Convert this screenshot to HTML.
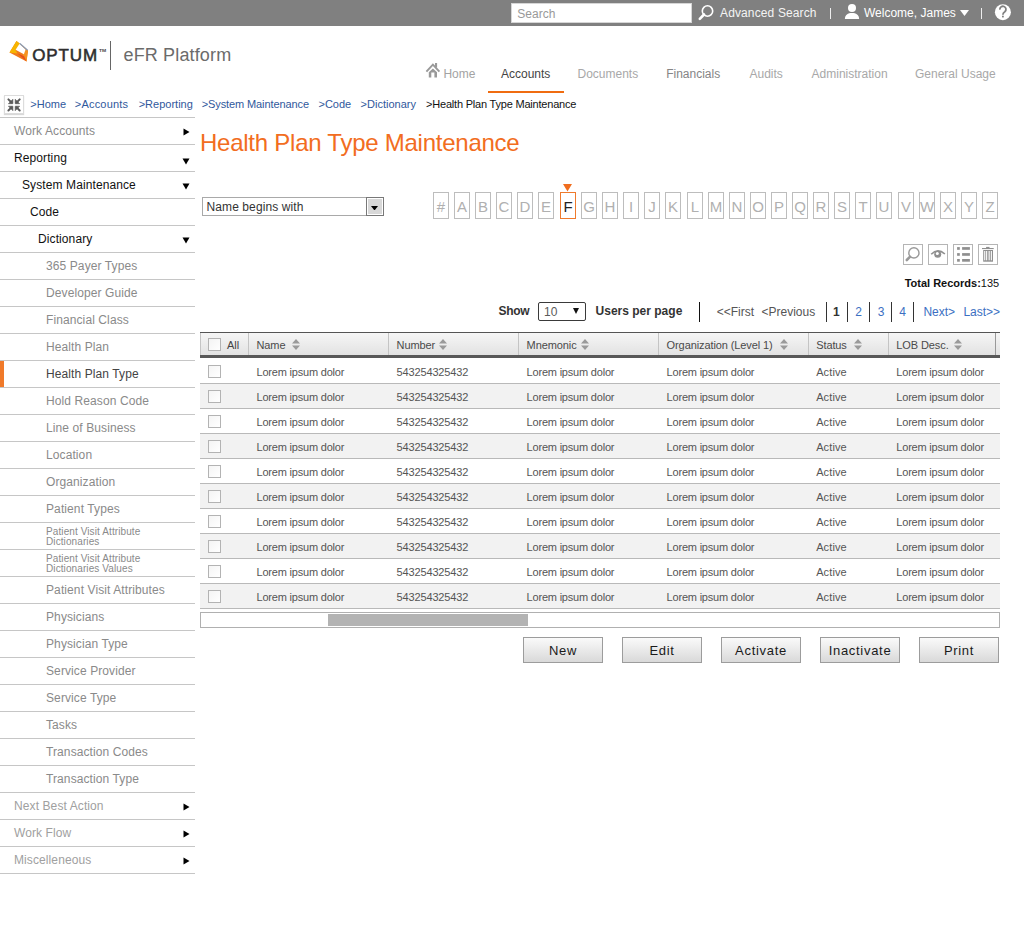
<!DOCTYPE html>
<html><head><meta charset="utf-8"><style>
html,body{margin:0;padding:0;}
body{width:1024px;height:950px;position:relative;overflow:hidden;background:#fff;font-family:"Liberation Sans", sans-serif;}
.t{position:absolute;white-space:nowrap;}
.b{position:absolute;}
</style></head><body>
<div class="b" style="left:0px;top:0px;width:1024px;height:26px;background:#808080"></div>
<div class="b" style="left:511px;top:3px;width:181px;height:20px;background:#fff;border:1px solid #d6d6d6;box-sizing:border-box"></div>
<div class="t" style="left:517.3px;top:4.84px;font-size:12px;line-height:18px;color:#999;font-weight:400;">Search</div>
<svg class="b" style="left:696px;top:3px" width="20" height="20" viewBox="0 0 20 20"><circle cx="11.5" cy="8" r="5.2" fill="none" stroke="#fff" stroke-width="1.6"/><line x1="8" y1="11.5" x2="3.8" y2="15.8" stroke="#fff" stroke-width="2.6" stroke-linecap="round"/></svg>
<div class="t" style="left:720px;top:4.14px;font-size:12px;line-height:18px;color:#f4f4f4;font-weight:400;letter-spacing:0.13px">Advanced Search</div>
<div class="b" style="left:830px;top:8px;width:1px;height:11px;background:#eee"></div>
<svg class="b" style="left:844px;top:3px" width="16" height="18" viewBox="0 0 16 18"><circle cx="8" cy="5" r="4" fill="#fff"/><path d="M0.9 16 C0.9 11.6 4 9.9 8 9.9 C12 9.9 15.1 11.6 15.1 16 Z" fill="#fff"/></svg>
<div class="t" style="left:864px;top:4.14px;font-size:12px;line-height:18px;color:#fff;font-weight:400;">Welcome, James</div>
<svg class="b" style="left:960px;top:10px" width="9" height="6" viewBox="0 0 9 6"><path d="M0 0 H9 L4.5 6 Z" fill="#fff"/></svg>
<div class="b" style="left:981px;top:8px;width:1px;height:11px;background:#eee"></div>
<svg class="b" style="left:994px;top:4px" width="18" height="18" viewBox="0 0 18 18"><circle cx="8.9" cy="8.2" r="8" fill="#fff"/><path d="M5.9 5.7 A3.05 3.05 0 1 1 10.8 7.7 Q8.9 8.9 8.9 10.7" fill="none" stroke="#808080" stroke-width="1.8"/><rect x="8" y="11.7" width="1.8" height="1.7" fill="#808080"/></svg>
<svg class="b" style="left:0px;top:30px" width="32" height="40" viewBox="0 30 32 40"><path d="M16.5 41 L28 50.4 L26.5 61.5 L9.5 52.5 Z" fill="#f07a1c"/><path d="M16.5 41 L20 43.8 L15.5 50 L17.5 53.6 L9.5 52.5 Z" fill="#f7b500"/><path d="M24.5 49.5 L28 50.4 L26.5 61.5 L22 57 Z" fill="#f59320"/><path d="M17.5 53.6 L24 56 L26.5 61.5 Z" fill="#e8501a"/><path d="M19.5 43.8 L15.6 49.8 L23.9 54.2 L25.6 49.6 Z" fill="#fff"/><path d="M19.8 43.6 L27.6 50.2" stroke="#8a9ab0" stroke-width="1.3"/></svg>
<div class="t" style="left:32.2px;top:42.91px;font-size:17px;line-height:26px;color:#2e2e2e;font-weight:400;letter-spacing:0.9px;-webkit-text-stroke:0.55px #2e2e2e">OPTUM</div>
<div class="t" style="left:99.4px;top:47.51px;font-size:4px;line-height:6px;color:#444;font-weight:700;transform:scaleX(1.25);transform-origin:left">TM</div>
<div class="b" style="left:110px;top:41px;width:1px;height:29px;background:#666"></div>
<div class="t" style="left:123.5px;top:41.96px;font-size:18px;line-height:27px;color:#6b6b6b;font-weight:400;letter-spacing:0.15px">eFR Platform</div>
<svg class="b" style="left:420px;top:58px" width="24" height="24" viewBox="0 0 24 24"><polyline points="6.4,13.6 12.9,6.6 19.4,13.6" fill="none" stroke="#999" stroke-width="1.9"/><rect x="15" y="5" width="2.1" height="4.5" fill="#999"/><path d="M8.8 19.6 V14.3 L12.9 10.4 L17 14.3 V19.6 H14.4 V14.6 H11.3 V19.6 Z" fill="#999"/></svg>
<div class="t" style="left:443.4px;top:64.84px;font-size:12px;line-height:18px;color:#a3a3a3;font-weight:400;">Home</div>
<div class="t" style="left:501px;top:64.84px;font-size:12px;line-height:18px;color:#444;font-weight:400;">Accounts</div>
<div class="t" style="left:577.5px;top:64.84px;font-size:12px;line-height:18px;color:#a8a8a8;font-weight:400;">Documents</div>
<div class="t" style="left:666.2px;top:64.84px;font-size:12px;line-height:18px;color:#858585;font-weight:400;">Financials</div>
<div class="t" style="left:749.5px;top:64.84px;font-size:12px;line-height:18px;color:#a8a8a8;font-weight:400;">Audits</div>
<div class="t" style="left:811.6px;top:64.84px;font-size:12px;line-height:18px;color:#a8a8a8;font-weight:400;">Administration</div>
<div class="t" style="left:915px;top:64.84px;font-size:12px;line-height:18px;color:#a8a8a8;font-weight:400;">General Usage</div>
<div class="b" style="left:488px;top:91px;width:76px;height:2px;background:#f06c10"></div>
<div class="b" style="left:4px;top:95px;width:20px;height:19px;background:#fff;border:1px solid #dcdcdc;box-sizing:border-box;box-shadow:0px 1px 1px #d8d8d8"></div>
<svg class="b" style="left:0px;top:92px" width="30" height="26" viewBox="0 92 30 26"><g fill="#5a5a5a" stroke="#5a5a5a" stroke-linejoin="round"><path d="M12.9 103.7 L8.4 103.7 L12.9 99.2 Z" stroke-width="0.6"/><path d="M8.4 99.4 L11.5 102.5" stroke-width="2" stroke-linecap="round"/><path d="M15.2 103.7 L19.7 103.7 L15.2 99.2 Z" stroke-width="0.6"/><path d="M19.7 99.4 L16.6 102.5" stroke-width="2" stroke-linecap="round"/><path d="M12.9 106.2 L8.4 106.2 L12.9 110.7 Z" stroke-width="0.6"/><path d="M8.4 110.5 L11.5 107.4" stroke-width="2" stroke-linecap="round"/><path d="M15.2 106.2 L19.7 106.2 L15.2 110.7 Z" stroke-width="0.6"/><path d="M19.7 110.5 L16.6 107.4" stroke-width="2" stroke-linecap="round"/></g></svg>
<div class="t" style="left:30.3px;top:96.19px;font-size:11px;line-height:16px;color:#30589c;font-weight:400;letter-spacing:0px">&gt;Home</div>
<div class="t" style="left:74.8px;top:96.19px;font-size:11px;line-height:16px;color:#30589c;font-weight:400;letter-spacing:0.2px">&gt;Accounts</div>
<div class="t" style="left:138.7px;top:96.19px;font-size:11px;line-height:16px;color:#30589c;font-weight:400;letter-spacing:0px">&gt;Reporting</div>
<div class="t" style="left:201.7px;top:96.19px;font-size:11px;line-height:16px;color:#30589c;font-weight:400;letter-spacing:-0.1px">&gt;System Maintenance</div>
<div class="t" style="left:318.5px;top:96.19px;font-size:11px;line-height:16px;color:#30589c;font-weight:400;letter-spacing:0px">&gt;Code</div>
<div class="t" style="left:360.6px;top:96.19px;font-size:11px;line-height:16px;color:#30589c;font-weight:400;letter-spacing:0px">&gt;Dictionary</div>
<div class="t" style="left:426px;top:96.19px;font-size:11px;line-height:16px;color:#111;font-weight:400;letter-spacing:-0.2px">&gt;Health Plan Type Maintenance</div>
<div class="b" style="left:0px;top:117px;width:195px;height:1px;background:#c6c6c6"></div>
<div class="t" style="left:14px;top:121.84px;font-size:12px;line-height:18px;color:#8a8a8a;font-weight:400;letter-spacing:0.1px">Work Accounts</div>
<svg class="b" style="left:183px;top:128px" width="7" height="8" viewBox="0 0 7 8"><path d="M0.5 0.5 L6.5 4 L0.5 7.5 Z" fill="#000"/></svg>
<div class="b" style="left:0px;top:144px;width:195px;height:1px;background:#c6c6c6"></div>
<div class="t" style="left:14px;top:148.84px;font-size:12px;line-height:18px;color:#111;font-weight:400;letter-spacing:0.1px">Reporting</div>
<svg class="b" style="left:182px;top:158px" width="8" height="7" viewBox="0 0 8 7"><path d="M0.5 0.5 H7.5 L4 6.5 Z" fill="#000"/></svg>
<div class="b" style="left:0px;top:171px;width:195px;height:1px;background:#c6c6c6"></div>
<div class="t" style="left:22px;top:175.84px;font-size:12px;line-height:18px;color:#111;font-weight:400;letter-spacing:0.1px">System Maintenance</div>
<svg class="b" style="left:182px;top:182.5px" width="8" height="7" viewBox="0 0 8 7"><path d="M0.5 0.5 H7.5 L4 6.5 Z" fill="#000"/></svg>
<div class="b" style="left:0px;top:198px;width:195px;height:1px;background:#c6c6c6"></div>
<div class="t" style="left:30px;top:202.84px;font-size:12px;line-height:18px;color:#111;font-weight:400;letter-spacing:0.1px">Code</div>
<div class="b" style="left:0px;top:225px;width:195px;height:1px;background:#c6c6c6"></div>
<div class="t" style="left:38px;top:229.84px;font-size:12px;line-height:18px;color:#111;font-weight:400;letter-spacing:0.1px">Dictionary</div>
<svg class="b" style="left:182px;top:236.5px" width="8" height="7" viewBox="0 0 8 7"><path d="M0.5 0.5 H7.5 L4 6.5 Z" fill="#000"/></svg>
<div class="b" style="left:0px;top:252px;width:195px;height:1px;background:#c6c6c6"></div>
<div class="t" style="left:46px;top:256.84px;font-size:12px;line-height:18px;color:#8a8a8a;font-weight:400;letter-spacing:0.1px">365 Payer Types</div>
<div class="b" style="left:0px;top:279px;width:195px;height:1px;background:#c6c6c6"></div>
<div class="t" style="left:46px;top:283.84px;font-size:12px;line-height:18px;color:#8a8a8a;font-weight:400;letter-spacing:0.1px">Developer Guide</div>
<div class="b" style="left:0px;top:306px;width:195px;height:1px;background:#c6c6c6"></div>
<div class="t" style="left:46px;top:310.84px;font-size:12px;line-height:18px;color:#8a8a8a;font-weight:400;letter-spacing:0.1px">Financial Class</div>
<div class="b" style="left:0px;top:333px;width:195px;height:1px;background:#c6c6c6"></div>
<div class="t" style="left:46px;top:337.84px;font-size:12px;line-height:18px;color:#8a8a8a;font-weight:400;letter-spacing:0.1px">Health Plan</div>
<div class="b" style="left:0px;top:360px;width:195px;height:1px;background:#c6c6c6"></div>
<div class="t" style="left:46px;top:364.84px;font-size:12px;line-height:18px;color:#444;font-weight:400;letter-spacing:0.1px">Health Plan Type</div>
<div class="b" style="left:0px;top:361px;width:4px;height:26px;background:#f07a2a"></div>
<div class="b" style="left:0px;top:387px;width:195px;height:1px;background:#c6c6c6"></div>
<div class="t" style="left:46px;top:391.84px;font-size:12px;line-height:18px;color:#8a8a8a;font-weight:400;letter-spacing:0.1px">Hold Reason Code</div>
<div class="b" style="left:0px;top:414px;width:195px;height:1px;background:#c6c6c6"></div>
<div class="t" style="left:46px;top:418.84px;font-size:12px;line-height:18px;color:#8a8a8a;font-weight:400;letter-spacing:0.1px">Line of Business</div>
<div class="b" style="left:0px;top:441px;width:195px;height:1px;background:#c6c6c6"></div>
<div class="t" style="left:46px;top:445.84px;font-size:12px;line-height:18px;color:#8a8a8a;font-weight:400;letter-spacing:0.1px">Location</div>
<div class="b" style="left:0px;top:468px;width:195px;height:1px;background:#c6c6c6"></div>
<div class="t" style="left:46px;top:472.84px;font-size:12px;line-height:18px;color:#8a8a8a;font-weight:400;letter-spacing:0.1px">Organization</div>
<div class="b" style="left:0px;top:495px;width:195px;height:1px;background:#c6c6c6"></div>
<div class="t" style="left:46px;top:499.84px;font-size:12px;line-height:18px;color:#8a8a8a;font-weight:400;letter-spacing:0.1px">Patient Types</div>
<div class="b" style="left:0px;top:522px;width:195px;height:1px;background:#c6c6c6"></div>
<div class="t" style="left:46px;top:523.74px;font-size:10px;line-height:15px;color:#8a8a8a;font-weight:400;letter-spacing:0.1px">Patient Visit Attribute</div>
<div class="t" style="left:46px;top:534.03px;font-size:10px;line-height:15px;color:#8a8a8a;font-weight:400;letter-spacing:0.1px">Dictionaries</div>
<div class="b" style="left:0px;top:549px;width:195px;height:1px;background:#c6c6c6"></div>
<div class="t" style="left:46px;top:550.74px;font-size:10px;line-height:15px;color:#8a8a8a;font-weight:400;letter-spacing:0.1px">Patient Visit Attribute</div>
<div class="t" style="left:46px;top:561.03px;font-size:10px;line-height:15px;color:#8a8a8a;font-weight:400;letter-spacing:0.1px">Dictionaries Values</div>
<div class="b" style="left:0px;top:576px;width:195px;height:1px;background:#c6c6c6"></div>
<div class="t" style="left:46px;top:580.84px;font-size:12px;line-height:18px;color:#8a8a8a;font-weight:400;letter-spacing:0.1px">Patient Visit Attributes</div>
<div class="b" style="left:0px;top:603px;width:195px;height:1px;background:#c6c6c6"></div>
<div class="t" style="left:46px;top:607.84px;font-size:12px;line-height:18px;color:#8a8a8a;font-weight:400;letter-spacing:0.1px">Physicians</div>
<div class="b" style="left:0px;top:630px;width:195px;height:1px;background:#c6c6c6"></div>
<div class="t" style="left:46px;top:634.84px;font-size:12px;line-height:18px;color:#8a8a8a;font-weight:400;letter-spacing:0.1px">Physician Type</div>
<div class="b" style="left:0px;top:657px;width:195px;height:1px;background:#c6c6c6"></div>
<div class="t" style="left:46px;top:661.84px;font-size:12px;line-height:18px;color:#8a8a8a;font-weight:400;letter-spacing:0.1px">Service Provider</div>
<div class="b" style="left:0px;top:684px;width:195px;height:1px;background:#c6c6c6"></div>
<div class="t" style="left:46px;top:688.84px;font-size:12px;line-height:18px;color:#8a8a8a;font-weight:400;letter-spacing:0.1px">Service Type</div>
<div class="b" style="left:0px;top:711px;width:195px;height:1px;background:#c6c6c6"></div>
<div class="t" style="left:46px;top:715.84px;font-size:12px;line-height:18px;color:#8a8a8a;font-weight:400;letter-spacing:0.1px">Tasks</div>
<div class="b" style="left:0px;top:738px;width:195px;height:1px;background:#c6c6c6"></div>
<div class="t" style="left:46px;top:742.84px;font-size:12px;line-height:18px;color:#8a8a8a;font-weight:400;letter-spacing:0.1px">Transaction Codes</div>
<div class="b" style="left:0px;top:765px;width:195px;height:1px;background:#c6c6c6"></div>
<div class="t" style="left:46px;top:769.84px;font-size:12px;line-height:18px;color:#8a8a8a;font-weight:400;letter-spacing:0.1px">Transaction Type</div>
<div class="b" style="left:0px;top:792px;width:195px;height:1px;background:#c6c6c6"></div>
<div class="t" style="left:14px;top:796.84px;font-size:12px;line-height:18px;color:#a0a0a0;font-weight:400;letter-spacing:0.1px">Next Best Action</div>
<svg class="b" style="left:183px;top:803px" width="7" height="8" viewBox="0 0 7 8"><path d="M0.5 0.5 L6.5 4 L0.5 7.5 Z" fill="#000"/></svg>
<div class="b" style="left:0px;top:819px;width:195px;height:1px;background:#c6c6c6"></div>
<div class="t" style="left:14px;top:823.84px;font-size:12px;line-height:18px;color:#a0a0a0;font-weight:400;letter-spacing:0.1px">Work Flow</div>
<svg class="b" style="left:183px;top:830px" width="7" height="8" viewBox="0 0 7 8"><path d="M0.5 0.5 L6.5 4 L0.5 7.5 Z" fill="#000"/></svg>
<div class="b" style="left:0px;top:846px;width:195px;height:1px;background:#c6c6c6"></div>
<div class="t" style="left:14px;top:850.84px;font-size:12px;line-height:18px;color:#a0a0a0;font-weight:400;letter-spacing:0.1px">Miscelleneous</div>
<svg class="b" style="left:183px;top:857px" width="7" height="8" viewBox="0 0 7 8"><path d="M0.5 0.5 L6.5 4 L0.5 7.5 Z" fill="#000"/></svg>
<div class="b" style="left:0px;top:873px;width:195px;height:1px;background:#c6c6c6"></div>
<div class="t" style="left:200px;top:124.68px;font-size:24px;line-height:36px;color:#f26d21;font-weight:400;letter-spacing:-0.25px">Health Plan Type Maintenance</div>
<div class="b" style="left:202px;top:197px;width:182px;height:19px;background:#fff;border:1px solid #a9a9a9;box-sizing:border-box"></div>
<div class="t" style="left:206.5px;top:197.84px;font-size:12px;line-height:18px;color:#333;font-weight:400;letter-spacing:0.1px">Name begins with</div>
<div class="b" style="left:366px;top:197px;width:18px;height:19px;background:#d8d8d8;border:1px solid #787878;box-sizing:border-box;box-shadow:inset 0 0 0 1px #fff"></div>
<svg class="b" style="left:371px;top:205.8px" width="7" height="4.5" viewBox="0 0 7 4.5"><path d="M0 0 H7 L3.5 4.5 Z" fill="#000"/></svg>
<div class="b" style="left:433.00px;top:192px;width:16px;height:27px;border:1px solid #bdbdbd;box-sizing:border-box;font-size:15px;line-height:27px;text-align:center;color:#b0b0b0">#</div>
<div class="b" style="left:454.00px;top:192px;width:16px;height:27px;border:1px solid #bdbdbd;box-sizing:border-box;font-size:15px;line-height:27px;text-align:center;color:#b0b0b0">A</div>
<div class="b" style="left:475.00px;top:192px;width:16px;height:27px;border:1px solid #bdbdbd;box-sizing:border-box;font-size:15px;line-height:27px;text-align:center;color:#b0b0b0">B</div>
<div class="b" style="left:496.00px;top:192px;width:16px;height:27px;border:1px solid #bdbdbd;box-sizing:border-box;font-size:15px;line-height:27px;text-align:center;color:#b0b0b0">C</div>
<div class="b" style="left:517.00px;top:192px;width:16px;height:27px;border:1px solid #bdbdbd;box-sizing:border-box;font-size:15px;line-height:27px;text-align:center;color:#b0b0b0">D</div>
<div class="b" style="left:538.00px;top:192px;width:16px;height:27px;border:1px solid #bdbdbd;box-sizing:border-box;font-size:15px;line-height:27px;text-align:center;color:#b0b0b0">E</div>
<div class="b" style="left:560.00px;top:192px;width:16px;height:27px;border:1px solid #ef7a2c;box-sizing:border-box;font-size:15px;line-height:27px;text-align:center;color:#222">F</div>
<div class="b" style="left:581.00px;top:192px;width:16px;height:27px;border:1px solid #bdbdbd;box-sizing:border-box;font-size:15px;line-height:27px;text-align:center;color:#b0b0b0">G</div>
<div class="b" style="left:602.00px;top:192px;width:16px;height:27px;border:1px solid #bdbdbd;box-sizing:border-box;font-size:15px;line-height:27px;text-align:center;color:#b0b0b0">H</div>
<div class="b" style="left:623.00px;top:192px;width:16px;height:27px;border:1px solid #bdbdbd;box-sizing:border-box;font-size:15px;line-height:27px;text-align:center;color:#b0b0b0">I</div>
<div class="b" style="left:644.00px;top:192px;width:16px;height:27px;border:1px solid #bdbdbd;box-sizing:border-box;font-size:15px;line-height:27px;text-align:center;color:#b0b0b0">J</div>
<div class="b" style="left:665.00px;top:192px;width:16px;height:27px;border:1px solid #bdbdbd;box-sizing:border-box;font-size:15px;line-height:27px;text-align:center;color:#b0b0b0">K</div>
<div class="b" style="left:687.00px;top:192px;width:16px;height:27px;border:1px solid #bdbdbd;box-sizing:border-box;font-size:15px;line-height:27px;text-align:center;color:#b0b0b0">L</div>
<div class="b" style="left:708.00px;top:192px;width:16px;height:27px;border:1px solid #bdbdbd;box-sizing:border-box;font-size:15px;line-height:27px;text-align:center;color:#b0b0b0">M</div>
<div class="b" style="left:729.00px;top:192px;width:16px;height:27px;border:1px solid #bdbdbd;box-sizing:border-box;font-size:15px;line-height:27px;text-align:center;color:#b0b0b0">N</div>
<div class="b" style="left:750.00px;top:192px;width:16px;height:27px;border:1px solid #bdbdbd;box-sizing:border-box;font-size:15px;line-height:27px;text-align:center;color:#b0b0b0">O</div>
<div class="b" style="left:771.00px;top:192px;width:16px;height:27px;border:1px solid #bdbdbd;box-sizing:border-box;font-size:15px;line-height:27px;text-align:center;color:#b0b0b0">P</div>
<div class="b" style="left:792.00px;top:192px;width:16px;height:27px;border:1px solid #bdbdbd;box-sizing:border-box;font-size:15px;line-height:27px;text-align:center;color:#b0b0b0">Q</div>
<div class="b" style="left:813.00px;top:192px;width:16px;height:27px;border:1px solid #bdbdbd;box-sizing:border-box;font-size:15px;line-height:27px;text-align:center;color:#b0b0b0">R</div>
<div class="b" style="left:834.00px;top:192px;width:16px;height:27px;border:1px solid #bdbdbd;box-sizing:border-box;font-size:15px;line-height:27px;text-align:center;color:#b0b0b0">S</div>
<div class="b" style="left:855.00px;top:192px;width:16px;height:27px;border:1px solid #bdbdbd;box-sizing:border-box;font-size:15px;line-height:27px;text-align:center;color:#b0b0b0">T</div>
<div class="b" style="left:876.00px;top:192px;width:16px;height:27px;border:1px solid #bdbdbd;box-sizing:border-box;font-size:15px;line-height:27px;text-align:center;color:#b0b0b0">U</div>
<div class="b" style="left:898.00px;top:192px;width:16px;height:27px;border:1px solid #bdbdbd;box-sizing:border-box;font-size:15px;line-height:27px;text-align:center;color:#b0b0b0">V</div>
<div class="b" style="left:919.00px;top:192px;width:16px;height:27px;border:1px solid #bdbdbd;box-sizing:border-box;font-size:15px;line-height:27px;text-align:center;color:#b0b0b0">W</div>
<div class="b" style="left:940.00px;top:192px;width:16px;height:27px;border:1px solid #bdbdbd;box-sizing:border-box;font-size:15px;line-height:27px;text-align:center;color:#b0b0b0">X</div>
<div class="b" style="left:961.00px;top:192px;width:16px;height:27px;border:1px solid #bdbdbd;box-sizing:border-box;font-size:15px;line-height:27px;text-align:center;color:#b0b0b0">Y</div>
<div class="b" style="left:982.00px;top:192px;width:16px;height:27px;border:1px solid #bdbdbd;box-sizing:border-box;font-size:15px;line-height:27px;text-align:center;color:#b0b0b0">Z</div>
<svg class="b" style="left:563px;top:183.5px" width="9" height="8" viewBox="0 0 9 8"><path d="M0 0 H9 L4.5 7.5 Z" fill="#f06d1e"/></svg>
<div class="b" style="left:903px;top:244px;width:20px;height:21px;border:1px solid #b5b5b5;box-sizing:border-box;background:#fff"></div>
<div class="b" style="left:928px;top:244px;width:20px;height:21px;border:1px solid #b5b5b5;box-sizing:border-box;background:#fff"></div>
<div class="b" style="left:953px;top:244px;width:20px;height:21px;border:1px solid #b5b5b5;box-sizing:border-box;background:#fff"></div>
<div class="b" style="left:978px;top:244px;width:20px;height:21px;border:1px solid #b5b5b5;box-sizing:border-box;background:#fff"></div>
<svg class="b" style="left:903px;top:244px" width="20" height="21" viewBox="0 0 20 21"><circle cx="10.9" cy="8.9" r="5.1" fill="none" stroke="#999" stroke-width="1.4"/><line x1="3.8" y1="16" x2="6.9" y2="12.9" stroke="#999" stroke-width="2.6" stroke-linecap="round"/></svg>
<svg class="b" style="left:928px;top:244px" width="20" height="21" viewBox="0 0 20 21"><path d="M3.2 10.2 Q9.7 3.6 16.9 10" fill="none" stroke="#8f8f8f" stroke-width="1.6"/><circle cx="9.7" cy="10.3" r="3.5" fill="#8f8f8f"/><circle cx="9.3" cy="9.4" r="1.5" fill="#fff"/></svg>
<svg class="b" style="left:953px;top:244px" width="20" height="21" viewBox="0 0 20 21" fill="#8f8f8f"><rect x="4.1" y="3.1" width="2.7" height="2.7"/><rect x="9.1" y="3.1" width="7.8" height="2.7"/><rect x="4.1" y="9.1" width="2.7" height="2.7"/><rect x="9.1" y="9.1" width="7.8" height="2.7"/><rect x="4.1" y="15" width="2.7" height="2.7"/><rect x="9.1" y="15" width="7.8" height="2.7"/></svg>
<svg class="b" style="left:978px;top:244px" width="20" height="21" viewBox="0 0 20 21"><rect x="4" y="4" width="11.7" height="1.1" fill="#8f8f8f"/><rect x="8.1" y="2.9" width="3.4" height="1.2" fill="#8f8f8f"/><rect x="5.2" y="6" width="9.8" height="11.7" fill="#8f8f8f"/><rect x="6.2" y="7" width="1.1" height="9.3" fill="#fff"/><rect x="8.1" y="7" width="1.1" height="9.3" fill="#fff"/><rect x="10.6" y="7" width="1.1" height="9.3" fill="#fff"/><rect x="12.8" y="7" width="1.1" height="9.3" fill="#fff"/></svg>
<div class="t" style="right:24.8px;top:274.54px;font-size:11px;line-height:16.5px;color:#111"><b>Total Records:</b>135</div>
<div class="t" style="left:498.5px;top:302.04px;font-size:12px;line-height:18px;color:#333;font-weight:700;letter-spacing:-0.3px">Show</div>
<div class="b" style="left:538px;top:302px;width:48px;height:19px;border:1px solid #3a3a3a;border-radius:2px;box-sizing:border-box;background:#fff"></div>
<div class="t" style="left:544px;top:302.84px;font-size:12px;line-height:18px;color:#5a5a5a;font-weight:400;">10</div>
<svg class="b" style="left:573px;top:308px" width="6" height="6" viewBox="0 0 6 6"><path d="M0 0 H6 L3 6 Z" fill="#111"/></svg>
<div class="t" style="left:595.6px;top:302.04px;font-size:12px;line-height:18px;color:#333;font-weight:700;">Users per page</div>
<div class="b" style="left:699px;top:302px;width:1px;height:20px;background:#111"></div>
<div class="t" style="left:716.7px;top:303.14px;font-size:12px;line-height:18px;color:#555;font-weight:400;">&lt;&lt;First</div>
<div class="t" style="left:761.5px;top:303.14px;font-size:12px;line-height:18px;color:#555;font-weight:400;">&lt;Previous</div>
<div class="b" style="left:826px;top:302px;width:1px;height:20px;background:#333"></div>
<div class="b" style="left:847px;top:302px;width:1px;height:20px;background:#333"></div>
<div class="b" style="left:869px;top:302px;width:1px;height:20px;background:#333"></div>
<div class="b" style="left:891px;top:302px;width:1px;height:20px;background:#333"></div>
<div class="b" style="left:913px;top:302px;width:1px;height:20px;background:#333"></div>
<div class="t" style="left:833px;top:303.14px;font-size:12px;line-height:18px;color:#333;font-weight:700;">1</div>
<div class="t" style="left:855.3px;top:303.14px;font-size:12px;line-height:18px;color:#3b6fc2;font-weight:400;">2</div>
<div class="t" style="left:877.7px;top:303.14px;font-size:12px;line-height:18px;color:#3b6fc2;font-weight:400;">3</div>
<div class="t" style="left:899.2px;top:303.14px;font-size:12px;line-height:18px;color:#3b6fc2;font-weight:400;">4</div>
<div class="t" style="left:923.4px;top:303.14px;font-size:12px;line-height:18px;color:#3b6fc2;font-weight:400;">Next&gt;</div>
<div class="t" style="left:963.4px;top:303.14px;font-size:12px;line-height:18px;color:#3b6fc2;font-weight:400;">Last&gt;&gt;</div>
<div class="b" style="left:200px;top:332px;width:800px;height:1px;background:#555"></div>
<div class="b" style="left:200px;top:333px;width:800px;height:22px;background:linear-gradient(#f6f6f6,#e2e2e2)"></div>
<div class="b" style="left:200px;top:355px;width:800px;height:3px;background:#585858"></div>
<div class="b" style="left:200px;top:333px;width:1px;height:22px;background:#c4c4c4"></div>
<div class="b" style="left:248px;top:333px;width:1px;height:22px;background:#c4c4c4"></div>
<div class="b" style="left:388px;top:333px;width:1px;height:22px;background:#c4c4c4"></div>
<div class="b" style="left:518px;top:333px;width:1px;height:22px;background:#c4c4c4"></div>
<div class="b" style="left:658px;top:333px;width:1px;height:22px;background:#c4c4c4"></div>
<div class="b" style="left:808px;top:333px;width:1px;height:22px;background:#c4c4c4"></div>
<div class="b" style="left:888px;top:333px;width:1px;height:22px;background:#c4c4c4"></div>
<div class="b" style="left:995px;top:333px;width:1px;height:22px;background:#999"></div>
<div class="b" style="left:208px;top:338px;width:13px;height:13px;border:1px solid #b3b3b3;box-sizing:border-box;background:linear-gradient(135deg,#f4f4f4,#fff)"></div>
<div class="t" style="left:227px;top:337.19px;font-size:11px;line-height:16px;color:#444;font-weight:400;">All</div>
<div class="t" style="left:256.5px;top:337.19px;font-size:11px;line-height:16px;color:#4a4a4a;font-weight:400;letter-spacing:-0.1px">Name</div>
<svg class="b" style="left:292px;top:339px" width="8" height="11" viewBox="0 0 8 11"><path d="M4 0 L8 4.5 H0 Z M0 6.5 H8 L4 11 Z" fill="#9a9a9a"/></svg>
<div class="t" style="left:396.6px;top:337.19px;font-size:11px;line-height:16px;color:#4a4a4a;font-weight:400;letter-spacing:-0.1px">Number</div>
<svg class="b" style="left:439px;top:339px" width="8" height="11" viewBox="0 0 8 11"><path d="M4 0 L8 4.5 H0 Z M0 6.5 H8 L4 11 Z" fill="#9a9a9a"/></svg>
<div class="t" style="left:526.6px;top:337.19px;font-size:11px;line-height:16px;color:#4a4a4a;font-weight:400;letter-spacing:-0.1px">Mnemonic</div>
<svg class="b" style="left:581.3px;top:339px" width="8" height="11" viewBox="0 0 8 11"><path d="M4 0 L8 4.5 H0 Z M0 6.5 H8 L4 11 Z" fill="#9a9a9a"/></svg>
<div class="t" style="left:666.6px;top:337.19px;font-size:11px;line-height:16px;color:#4a4a4a;font-weight:400;letter-spacing:-0.1px">Organization (Level 1)</div>
<svg class="b" style="left:779.7px;top:339px" width="8" height="11" viewBox="0 0 8 11"><path d="M4 0 L8 4.5 H0 Z M0 6.5 H8 L4 11 Z" fill="#9a9a9a"/></svg>
<div class="t" style="left:816.2px;top:337.19px;font-size:11px;line-height:16px;color:#4a4a4a;font-weight:400;letter-spacing:-0.1px">Status</div>
<svg class="b" style="left:854px;top:339px" width="8" height="11" viewBox="0 0 8 11"><path d="M4 0 L8 4.5 H0 Z M0 6.5 H8 L4 11 Z" fill="#9a9a9a"/></svg>
<div class="t" style="left:896.3px;top:337.19px;font-size:11px;line-height:16px;color:#4a4a4a;font-weight:400;letter-spacing:-0.1px">LOB Desc.</div>
<svg class="b" style="left:954px;top:339px" width="8" height="11" viewBox="0 0 8 11"><path d="M4 0 L8 4.5 H0 Z M0 6.5 H8 L4 11 Z" fill="#9a9a9a"/></svg>
<div class="b" style="left:200px;top:358px;width:800px;height:25px;background:#fff"></div>
<div class="b" style="left:200px;top:383px;width:800px;height:25px;background:#f2f2f2"></div>
<div class="b" style="left:200px;top:408px;width:800px;height:25px;background:#fff"></div>
<div class="b" style="left:200px;top:433px;width:800px;height:25px;background:#f2f2f2"></div>
<div class="b" style="left:200px;top:458px;width:800px;height:25px;background:#fff"></div>
<div class="b" style="left:200px;top:483px;width:800px;height:25px;background:#f2f2f2"></div>
<div class="b" style="left:200px;top:508px;width:800px;height:25px;background:#fff"></div>
<div class="b" style="left:200px;top:533px;width:800px;height:25px;background:#f2f2f2"></div>
<div class="b" style="left:200px;top:558px;width:800px;height:25px;background:#fff"></div>
<div class="b" style="left:200px;top:583px;width:800px;height:25px;background:#f2f2f2"></div>
<div class="b" style="left:200px;top:383px;width:800px;height:1px;background:#b9b9b9"></div>
<div class="b" style="left:200px;top:408px;width:800px;height:1px;background:#b9b9b9"></div>
<div class="b" style="left:200px;top:433px;width:800px;height:1px;background:#b9b9b9"></div>
<div class="b" style="left:200px;top:458px;width:800px;height:1px;background:#b9b9b9"></div>
<div class="b" style="left:200px;top:483px;width:800px;height:1px;background:#b9b9b9"></div>
<div class="b" style="left:200px;top:508px;width:800px;height:1px;background:#b9b9b9"></div>
<div class="b" style="left:200px;top:533px;width:800px;height:1px;background:#b9b9b9"></div>
<div class="b" style="left:200px;top:558px;width:800px;height:1px;background:#b9b9b9"></div>
<div class="b" style="left:200px;top:583px;width:800px;height:1px;background:#b9b9b9"></div>
<div class="b" style="left:200px;top:608px;width:800px;height:1px;background:#b9b9b9"></div>
<div class="b" style="left:208px;top:365px;width:13px;height:13px;border:1px solid #b3b3b3;box-sizing:border-box;background:linear-gradient(135deg,#f4f4f4,#fff)"></div>
<div class="t" style="left:256.5px;top:364.19px;font-size:11px;line-height:16px;color:#555;font-weight:400;letter-spacing:-0.2px">Lorem ipsum dolor</div>
<div class="t" style="left:396.6px;top:364.19px;font-size:11px;line-height:16px;color:#555;font-weight:400;letter-spacing:-0.15px">543254325432</div>
<div class="t" style="left:526.6px;top:364.19px;font-size:11px;line-height:16px;color:#555;font-weight:400;letter-spacing:-0.2px">Lorem ipsum dolor</div>
<div class="t" style="left:666.6px;top:364.19px;font-size:11px;line-height:16px;color:#555;font-weight:400;letter-spacing:-0.2px">Lorem ipsum dolor</div>
<div class="t" style="left:816.2px;top:364.19px;font-size:11px;line-height:16px;color:#555;font-weight:400;letter-spacing:0.1px">Active</div>
<div class="t" style="left:896.3px;top:364.19px;font-size:11px;line-height:16px;color:#555;font-weight:400;letter-spacing:-0.2px">Lorem ipsum dolor</div>
<div class="b" style="left:208px;top:390px;width:13px;height:13px;border:1px solid #b3b3b3;box-sizing:border-box;background:linear-gradient(135deg,#f4f4f4,#fff)"></div>
<div class="t" style="left:256.5px;top:389.19px;font-size:11px;line-height:16px;color:#555;font-weight:400;letter-spacing:-0.2px">Lorem ipsum dolor</div>
<div class="t" style="left:396.6px;top:389.19px;font-size:11px;line-height:16px;color:#555;font-weight:400;letter-spacing:-0.15px">543254325432</div>
<div class="t" style="left:526.6px;top:389.19px;font-size:11px;line-height:16px;color:#555;font-weight:400;letter-spacing:-0.2px">Lorem ipsum dolor</div>
<div class="t" style="left:666.6px;top:389.19px;font-size:11px;line-height:16px;color:#555;font-weight:400;letter-spacing:-0.2px">Lorem ipsum dolor</div>
<div class="t" style="left:816.2px;top:389.19px;font-size:11px;line-height:16px;color:#555;font-weight:400;letter-spacing:0.1px">Active</div>
<div class="t" style="left:896.3px;top:389.19px;font-size:11px;line-height:16px;color:#555;font-weight:400;letter-spacing:-0.2px">Lorem ipsum dolor</div>
<div class="b" style="left:208px;top:415px;width:13px;height:13px;border:1px solid #b3b3b3;box-sizing:border-box;background:linear-gradient(135deg,#f4f4f4,#fff)"></div>
<div class="t" style="left:256.5px;top:414.19px;font-size:11px;line-height:16px;color:#555;font-weight:400;letter-spacing:-0.2px">Lorem ipsum dolor</div>
<div class="t" style="left:396.6px;top:414.19px;font-size:11px;line-height:16px;color:#555;font-weight:400;letter-spacing:-0.15px">543254325432</div>
<div class="t" style="left:526.6px;top:414.19px;font-size:11px;line-height:16px;color:#555;font-weight:400;letter-spacing:-0.2px">Lorem ipsum dolor</div>
<div class="t" style="left:666.6px;top:414.19px;font-size:11px;line-height:16px;color:#555;font-weight:400;letter-spacing:-0.2px">Lorem ipsum dolor</div>
<div class="t" style="left:816.2px;top:414.19px;font-size:11px;line-height:16px;color:#555;font-weight:400;letter-spacing:0.1px">Active</div>
<div class="t" style="left:896.3px;top:414.19px;font-size:11px;line-height:16px;color:#555;font-weight:400;letter-spacing:-0.2px">Lorem ipsum dolor</div>
<div class="b" style="left:208px;top:440px;width:13px;height:13px;border:1px solid #b3b3b3;box-sizing:border-box;background:linear-gradient(135deg,#f4f4f4,#fff)"></div>
<div class="t" style="left:256.5px;top:439.19px;font-size:11px;line-height:16px;color:#555;font-weight:400;letter-spacing:-0.2px">Lorem ipsum dolor</div>
<div class="t" style="left:396.6px;top:439.19px;font-size:11px;line-height:16px;color:#555;font-weight:400;letter-spacing:-0.15px">543254325432</div>
<div class="t" style="left:526.6px;top:439.19px;font-size:11px;line-height:16px;color:#555;font-weight:400;letter-spacing:-0.2px">Lorem ipsum dolor</div>
<div class="t" style="left:666.6px;top:439.19px;font-size:11px;line-height:16px;color:#555;font-weight:400;letter-spacing:-0.2px">Lorem ipsum dolor</div>
<div class="t" style="left:816.2px;top:439.19px;font-size:11px;line-height:16px;color:#555;font-weight:400;letter-spacing:0.1px">Active</div>
<div class="t" style="left:896.3px;top:439.19px;font-size:11px;line-height:16px;color:#555;font-weight:400;letter-spacing:-0.2px">Lorem ipsum dolor</div>
<div class="b" style="left:208px;top:465px;width:13px;height:13px;border:1px solid #b3b3b3;box-sizing:border-box;background:linear-gradient(135deg,#f4f4f4,#fff)"></div>
<div class="t" style="left:256.5px;top:464.19px;font-size:11px;line-height:16px;color:#555;font-weight:400;letter-spacing:-0.2px">Lorem ipsum dolor</div>
<div class="t" style="left:396.6px;top:464.19px;font-size:11px;line-height:16px;color:#555;font-weight:400;letter-spacing:-0.15px">543254325432</div>
<div class="t" style="left:526.6px;top:464.19px;font-size:11px;line-height:16px;color:#555;font-weight:400;letter-spacing:-0.2px">Lorem ipsum dolor</div>
<div class="t" style="left:666.6px;top:464.19px;font-size:11px;line-height:16px;color:#555;font-weight:400;letter-spacing:-0.2px">Lorem ipsum dolor</div>
<div class="t" style="left:816.2px;top:464.19px;font-size:11px;line-height:16px;color:#555;font-weight:400;letter-spacing:0.1px">Active</div>
<div class="t" style="left:896.3px;top:464.19px;font-size:11px;line-height:16px;color:#555;font-weight:400;letter-spacing:-0.2px">Lorem ipsum dolor</div>
<div class="b" style="left:208px;top:490px;width:13px;height:13px;border:1px solid #b3b3b3;box-sizing:border-box;background:linear-gradient(135deg,#f4f4f4,#fff)"></div>
<div class="t" style="left:256.5px;top:489.19px;font-size:11px;line-height:16px;color:#555;font-weight:400;letter-spacing:-0.2px">Lorem ipsum dolor</div>
<div class="t" style="left:396.6px;top:489.19px;font-size:11px;line-height:16px;color:#555;font-weight:400;letter-spacing:-0.15px">543254325432</div>
<div class="t" style="left:526.6px;top:489.19px;font-size:11px;line-height:16px;color:#555;font-weight:400;letter-spacing:-0.2px">Lorem ipsum dolor</div>
<div class="t" style="left:666.6px;top:489.19px;font-size:11px;line-height:16px;color:#555;font-weight:400;letter-spacing:-0.2px">Lorem ipsum dolor</div>
<div class="t" style="left:816.2px;top:489.19px;font-size:11px;line-height:16px;color:#555;font-weight:400;letter-spacing:0.1px">Active</div>
<div class="t" style="left:896.3px;top:489.19px;font-size:11px;line-height:16px;color:#555;font-weight:400;letter-spacing:-0.2px">Lorem ipsum dolor</div>
<div class="b" style="left:208px;top:515px;width:13px;height:13px;border:1px solid #b3b3b3;box-sizing:border-box;background:linear-gradient(135deg,#f4f4f4,#fff)"></div>
<div class="t" style="left:256.5px;top:514.19px;font-size:11px;line-height:16px;color:#555;font-weight:400;letter-spacing:-0.2px">Lorem ipsum dolor</div>
<div class="t" style="left:396.6px;top:514.19px;font-size:11px;line-height:16px;color:#555;font-weight:400;letter-spacing:-0.15px">543254325432</div>
<div class="t" style="left:526.6px;top:514.19px;font-size:11px;line-height:16px;color:#555;font-weight:400;letter-spacing:-0.2px">Lorem ipsum dolor</div>
<div class="t" style="left:666.6px;top:514.19px;font-size:11px;line-height:16px;color:#555;font-weight:400;letter-spacing:-0.2px">Lorem ipsum dolor</div>
<div class="t" style="left:816.2px;top:514.19px;font-size:11px;line-height:16px;color:#555;font-weight:400;letter-spacing:0.1px">Active</div>
<div class="t" style="left:896.3px;top:514.19px;font-size:11px;line-height:16px;color:#555;font-weight:400;letter-spacing:-0.2px">Lorem ipsum dolor</div>
<div class="b" style="left:208px;top:540px;width:13px;height:13px;border:1px solid #b3b3b3;box-sizing:border-box;background:linear-gradient(135deg,#f4f4f4,#fff)"></div>
<div class="t" style="left:256.5px;top:539.19px;font-size:11px;line-height:16px;color:#555;font-weight:400;letter-spacing:-0.2px">Lorem ipsum dolor</div>
<div class="t" style="left:396.6px;top:539.19px;font-size:11px;line-height:16px;color:#555;font-weight:400;letter-spacing:-0.15px">543254325432</div>
<div class="t" style="left:526.6px;top:539.19px;font-size:11px;line-height:16px;color:#555;font-weight:400;letter-spacing:-0.2px">Lorem ipsum dolor</div>
<div class="t" style="left:666.6px;top:539.19px;font-size:11px;line-height:16px;color:#555;font-weight:400;letter-spacing:-0.2px">Lorem ipsum dolor</div>
<div class="t" style="left:816.2px;top:539.19px;font-size:11px;line-height:16px;color:#555;font-weight:400;letter-spacing:0.1px">Active</div>
<div class="t" style="left:896.3px;top:539.19px;font-size:11px;line-height:16px;color:#555;font-weight:400;letter-spacing:-0.2px">Lorem ipsum dolor</div>
<div class="b" style="left:208px;top:565px;width:13px;height:13px;border:1px solid #b3b3b3;box-sizing:border-box;background:linear-gradient(135deg,#f4f4f4,#fff)"></div>
<div class="t" style="left:256.5px;top:564.19px;font-size:11px;line-height:16px;color:#555;font-weight:400;letter-spacing:-0.2px">Lorem ipsum dolor</div>
<div class="t" style="left:396.6px;top:564.19px;font-size:11px;line-height:16px;color:#555;font-weight:400;letter-spacing:-0.15px">543254325432</div>
<div class="t" style="left:526.6px;top:564.19px;font-size:11px;line-height:16px;color:#555;font-weight:400;letter-spacing:-0.2px">Lorem ipsum dolor</div>
<div class="t" style="left:666.6px;top:564.19px;font-size:11px;line-height:16px;color:#555;font-weight:400;letter-spacing:-0.2px">Lorem ipsum dolor</div>
<div class="t" style="left:816.2px;top:564.19px;font-size:11px;line-height:16px;color:#555;font-weight:400;letter-spacing:0.1px">Active</div>
<div class="t" style="left:896.3px;top:564.19px;font-size:11px;line-height:16px;color:#555;font-weight:400;letter-spacing:-0.2px">Lorem ipsum dolor</div>
<div class="b" style="left:208px;top:590px;width:13px;height:13px;border:1px solid #b3b3b3;box-sizing:border-box;background:linear-gradient(135deg,#f4f4f4,#fff)"></div>
<div class="t" style="left:256.5px;top:589.19px;font-size:11px;line-height:16px;color:#555;font-weight:400;letter-spacing:-0.2px">Lorem ipsum dolor</div>
<div class="t" style="left:396.6px;top:589.19px;font-size:11px;line-height:16px;color:#555;font-weight:400;letter-spacing:-0.15px">543254325432</div>
<div class="t" style="left:526.6px;top:589.19px;font-size:11px;line-height:16px;color:#555;font-weight:400;letter-spacing:-0.2px">Lorem ipsum dolor</div>
<div class="t" style="left:666.6px;top:589.19px;font-size:11px;line-height:16px;color:#555;font-weight:400;letter-spacing:-0.2px">Lorem ipsum dolor</div>
<div class="t" style="left:816.2px;top:589.19px;font-size:11px;line-height:16px;color:#555;font-weight:400;letter-spacing:0.1px">Active</div>
<div class="t" style="left:896.3px;top:589.19px;font-size:11px;line-height:16px;color:#555;font-weight:400;letter-spacing:-0.2px">Lorem ipsum dolor</div>
<div class="b" style="left:200px;top:612px;width:800px;height:16px;border:1px solid #b0b0b0;box-sizing:border-box;background:#fff"></div>
<div class="b" style="left:328px;top:614px;width:200px;height:12px;background:#b3b3b3"></div>
<div class="b" style="left:523px;top:637px;width:80px;height:26px;border:1px solid #9c9c9c;box-sizing:border-box;background:linear-gradient(#fafafa,#d9d9d9);font-size:13px;line-height:26px;text-align:center;color:#1a1a1a;letter-spacing:0.7px">New</div>
<div class="b" style="left:622px;top:637px;width:80px;height:26px;border:1px solid #9c9c9c;box-sizing:border-box;background:linear-gradient(#fafafa,#d9d9d9);font-size:13px;line-height:26px;text-align:center;color:#1a1a1a;letter-spacing:0.7px">Edit</div>
<div class="b" style="left:721px;top:637px;width:80px;height:26px;border:1px solid #9c9c9c;box-sizing:border-box;background:linear-gradient(#fafafa,#d9d9d9);font-size:13px;line-height:26px;text-align:center;color:#1a1a1a;letter-spacing:0.7px">Activate</div>
<div class="b" style="left:820px;top:637px;width:80px;height:26px;border:1px solid #9c9c9c;box-sizing:border-box;background:linear-gradient(#fafafa,#d9d9d9);font-size:13px;line-height:26px;text-align:center;color:#1a1a1a;letter-spacing:0.7px">Inactivate</div>
<div class="b" style="left:919px;top:637px;width:80px;height:26px;border:1px solid #9c9c9c;box-sizing:border-box;background:linear-gradient(#fafafa,#d9d9d9);font-size:13px;line-height:26px;text-align:center;color:#1a1a1a;letter-spacing:0.7px">Print</div>
</body></html>
